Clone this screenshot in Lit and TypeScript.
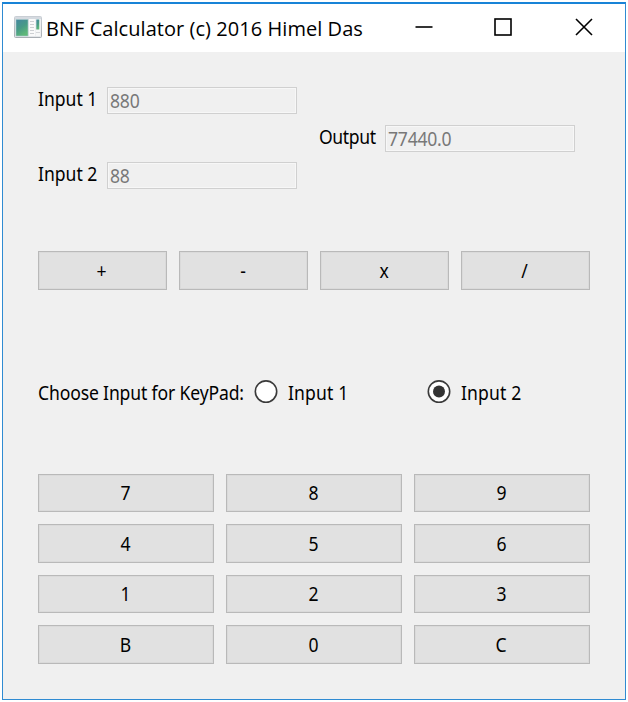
import { LitElement, html, svg, css } from "lit";
import { customElement, property, state } from "lit/decorators.js";
import { classMap } from "lit/directives/class-map.js";

@customElement("title-bar")
class TitleBar extends LitElement {
  static styles = css`
    :host { display: flex; align-items: center; height: 48px; background: #fff; padding-left: 11px; box-sizing: border-box; }
    .logo { width: 28px; height: 24px; flex: none; margin-top: -2px; }
    .title { flex: 1; margin-left: 4px; padding-top: 1px; white-space: nowrap; font: 20px/28px "Open Sans", sans-serif; color: #000; letter-spacing: 0.05px; }
    .controls { display: flex; padding-right: 1px; margin-top: -2px; }
    .control { display: flex; align-items: center; justify-content: center; width: 80px; height: 46px; }
  `;
  @property() heading = "";

  render() {
    return html`
      <svg class="logo" viewBox="0 0 28 24">
        <defs>
          <linearGradient id="pane" x1="0" y1="0" x2="0.5" y2="1">
            <stop offset="0" stop-color="#4587a0" /><stop offset="0.55" stop-color="#479a87" /><stop offset="1" stop-color="#5fb878" />
          </linearGradient>
          <linearGradient id="frame" x1="0" y1="0" x2="0" y2="1">
            <stop offset="0" stop-color="#c9ced4" /><stop offset="1" stop-color="#a9aeb3" />
          </linearGradient>
        </defs>
        <rect x="0.5" y="1.5" width="27" height="21" rx="1" fill="#e4e7ea" stroke="url(#frame)" />
        <rect x="1" y="2" width="26" height="2" fill="#d5dae0" />
        <rect x="2" y="4.5" width="12" height="16.5" fill="url(#pane)" stroke="#a5c5c8" stroke-width="0.6" />
        <rect x="15" y="4" width="6" height="17" fill="#fafafa" />
        <path d="M16 6.5h4M16 9.5h4M16 12.5h4M16 15.5h4M16 18.5h4" stroke="#cdd0d3" />
        <rect x="21.5" y="4" width="5" height="17" fill="#f7f8f8" />
        <rect x="22.3" y="4.5" width="3" height="10" fill="url(#pane)" />
        <path d="M22 17.5h4" stroke="#d5d7da" />
      </svg>
      <span class="title">${this.heading}</span>
      <div class="controls">
        <span class="control"><svg width="18" height="18"><path d="M0.5 9H17.5" stroke="#000" stroke-width="1.6" /></svg></span>
        <span class="control"><svg width="20" height="18"><rect x="1" y="1" width="16" height="16" fill="none" stroke="#000" stroke-width="1.6" /></svg></span>
        <span class="control"><svg width="18" height="18"><path d="M1 1L17 17M17 1L1 17" stroke="#000" stroke-width="1.6" /></svg></span>
      </div>
    `;
  }
}

@customElement("app-root")
class AppRoot extends LitElement {
  static styles = css`
    :host { display: block; box-sizing: border-box; height: 702px; padding: 2px; background: #fff; }
    .window {
      box-sizing: border-box; width: 624px; height: 698px; background: #f0f0f0;
      border: 1px solid #2f8bd2; border-top: 2px solid #1883d7;
      font: 19.5px/26px "Noto Sans", sans-serif; color: #000;
    }
    .body { padding: 35px 35px 0; }
    .text { display: inline-block; white-space: nowrap; transform: scaleX(0.9); transform-origin: 0 50%; }
    .fields { display: grid; grid-template-columns: 69px 190px 88px 190px; height: 102px; }
    .pair { grid-column: 1 / 3; display: flex; flex-direction: column; justify-content: space-between; }
    .field { display: flex; }
    .label { width: 69px; line-height: 24px; white-space: nowrap; }
    .field.out { grid-column: 3 / 5; align-self: center; padding-left: 22px; }
    .out .label { width: 66px; line-height: 23px; letter-spacing: -0.4px; }
    .box { box-sizing: border-box; width: 190px; height: 27px; border: 1px solid #d0d0d0; box-shadow: inset 0 0 0 1px #f7f7f7; padding-left: 2px; line-height: 26px; color: #787878; letter-spacing: -0.25px; }
    .ops, .keys { display: grid; gap: 12px; width: 552px; }
    .ops { grid-template-columns: repeat(4, 1fr); grid-template-rows: 39px; margin-top: 62px; }
    .keys { grid-template-columns: repeat(3, 1fr); grid-template-rows: 38px 39px 38px 39px; margin-top: 70px; }
    .key { box-sizing: border-box; margin: 0; padding: 0 1px 0 0; border: 1px solid #b9b9b9; background: #e1e1e1; color: #000; font: inherit; box-shadow: inset 0 0 0 1px #dadada; border-radius: 0; }
    .key .text { transform-origin: 50% 50%; }
    .choose { display: flex; align-items: center; height: 24px; margin-top: 90px; white-space: nowrap; }
    .prompt { flex: none; width: 216px; padding-top: 1px; letter-spacing: -0.15px; }
    .option { flex: none; display: flex; align-items: center; width: 173px; }
    .caption { padding-top: 1px; letter-spacing: 0.15px; }
    .dot { width: 24px; height: 24px; flex: none; margin-right: 10px; }
  `;
  @state() private target = 2;

  private field(label: string, value: string, out = false) {
    return html`<div class=${classMap({ field: true, out })}>
      <span class="label"><span class="text">${label}</span></span>
      <div class="box"><span class="text">${value}</span></div>
    </div>`;
  }

  private option(n: number) {
    return html`<span class="option" @click=${() => (this.target = n)}>
      <svg class="dot" viewBox="0 0 24 24">
        <circle cx="12" cy="11.6" r="10.7" fill="#fff" stroke="#3a3a3a" stroke-width="1.6" />
        ${this.target === n ? svg`<circle cx="12" cy="11.6" r="6" fill="#333" />` : ""}
      </svg>
      <span class="caption"><span class="text">Input ${n}</span></span>
    </span>`;
  }

  render() {
    const key = (k: string) => html`<button class="key"><span class="text">${k}</span></button>`;
    return html`
      <div class="window">
        <title-bar heading="BNF Calculator (c) 2016 Himel Das"></title-bar>
        <div class="body">
          <div class="fields">
            <div class="pair">${this.field("Input 1", "880")}${this.field("Input 2", "88")}</div>
            ${this.field("Output", "77440.0", true)}
          </div>
          <div class="ops">${["+", "-", "x", "/"].map(key)}</div>
          <div class="choose">
            <span class="prompt"><span class="text">Choose Input for KeyPad:</span></span>
            ${this.option(1)}${this.option(2)}
          </div>
          <div class="keys">${["7", "8", "9", "4", "5", "6", "1", "2", "3", "B", "0", "C"].map(key)}</div>
        </div>
      </div>
    `;
  }
}
